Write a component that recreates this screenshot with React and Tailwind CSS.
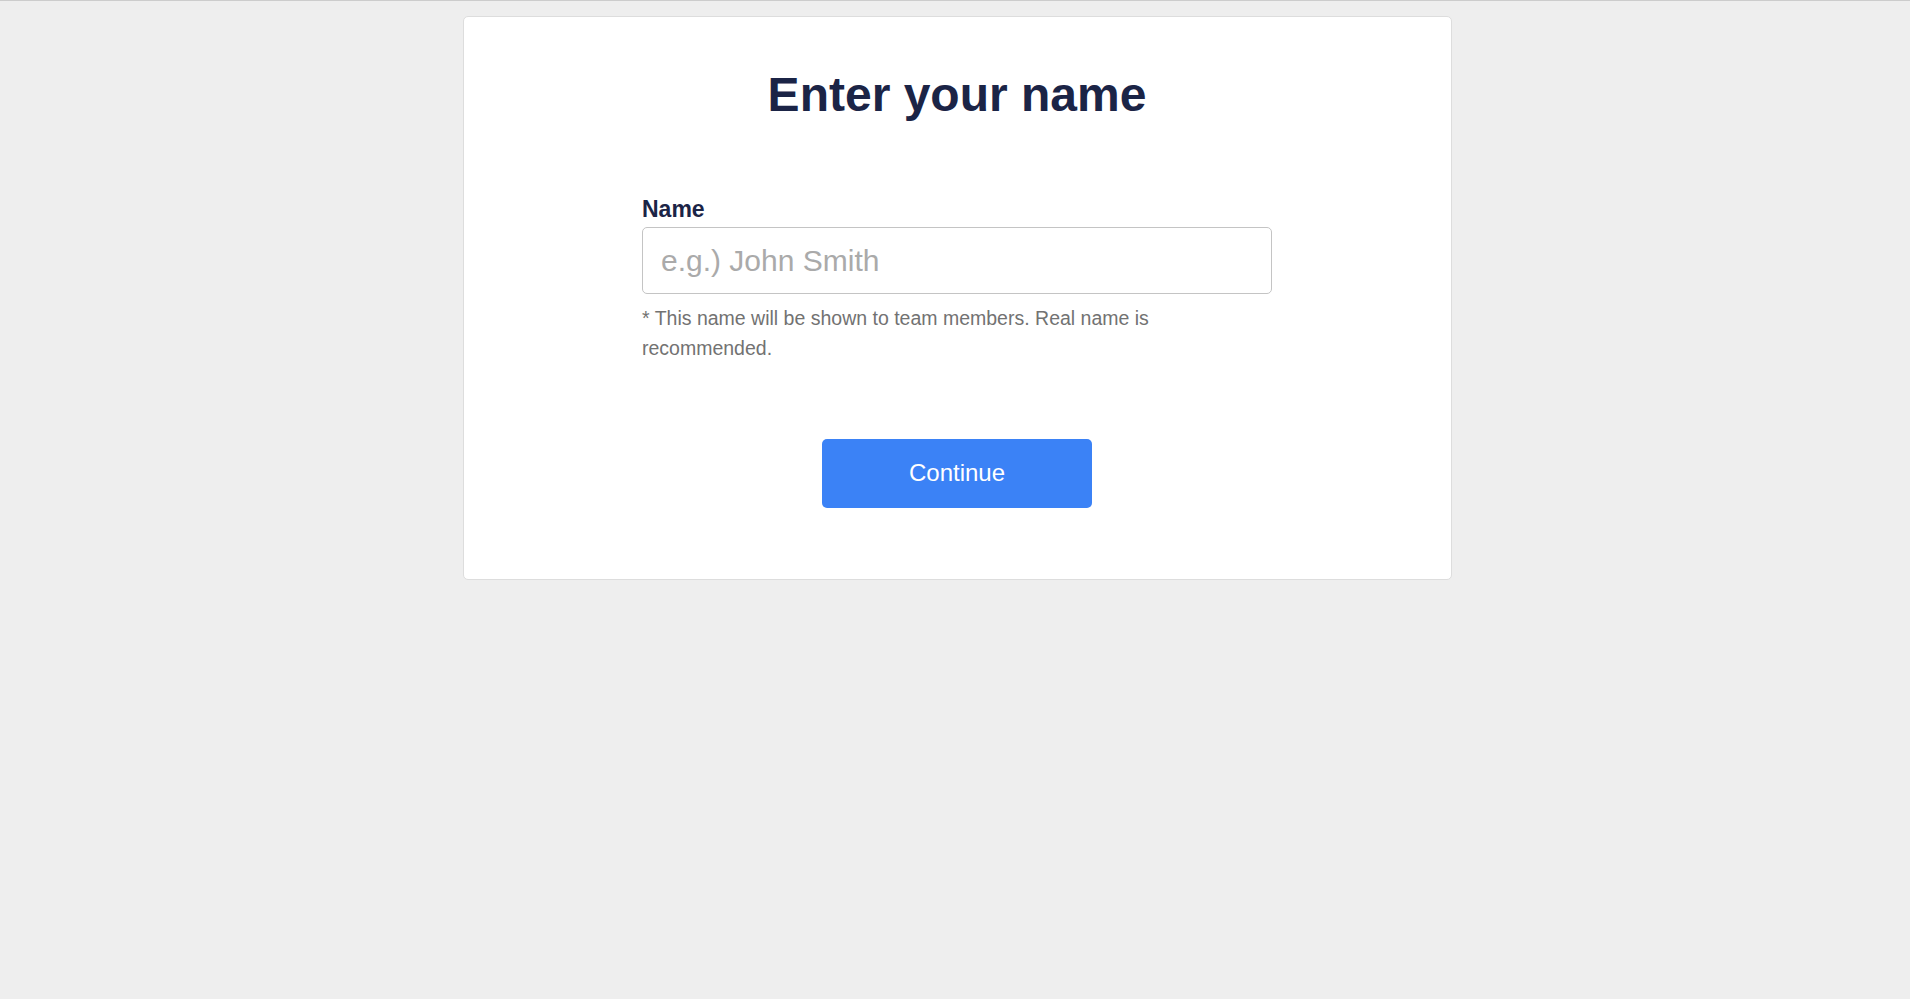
import React, { useState } from "react";

function App() {
  const [name, setName] = useState("");

  return (
    <div
      className="min-h-screen bg-[#eeeeee] border-t border-[#cccccc] pt-[15px] pl-1"
      style={{ fontFamily: '"Liberation Sans", Arial, sans-serif' }}
    >
      <div className="mx-auto w-[989px] bg-white border border-[#dddddd] rounded-[5px] pt-[49px] pb-[71px]">
        {/* Title */}
        <h1 className="text-center text-[48px] leading-[1.2] font-bold text-[#1b2446]">
          Enter your name
        </h1>

        {/* Form */}
        <form
          onSubmit={(e) => e.preventDefault()}
          className="mx-auto w-[630px] mt-[72px] flex flex-col"
        >
          <label className="block text-[23px] leading-[26px] font-bold text-[#1b2446] mb-[5px]">
            Name
          </label>
          <input
            type="text"
            value={name}
            onChange={(e) => setName(e.target.value)}
            placeholder="e.g.) John Smith"
            className="w-full h-[67px] px-[18px] pt-[2px] text-[30px] text-[#333333] placeholder:text-[#aaaaaa] border border-[#c4c4c4] rounded-[5px] outline-none"
          />
          <p className="mt-[9px] text-[19.5px] leading-[30px] text-[#727272]">
            * This name will be shown to team members. Real name is recommended.
          </p>

          <button
            type="submit"
            className="mx-auto mt-[76px] w-[270px] h-[69px] bg-[#3b82f6] text-white text-[24px] rounded-[5px]"
          >
            Continue
          </button>
        </form>
      </div>
    </div>
  );
}

export default App;
